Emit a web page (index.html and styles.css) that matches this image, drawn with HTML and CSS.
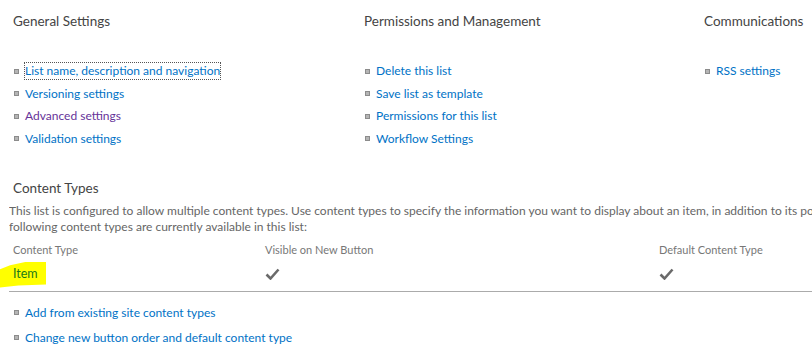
FILE: index.html
```html
<!DOCTYPE html>
<html>
<head>
  <title>List Settings</title>
  <link rel="stylesheet" href="styles.css">
</head>
<body>
  <div class="settings">
    <div class="group">
      <h2>General Settings</h2>
      <ul class="links">
        <li><a href="#" class="focused">List name, description and navigation</a></li>
        <li><a href="#">Versioning settings</a></li>
        <li><a href="#" class="visited">Advanced settings</a></li>
        <li><a href="#">Validation settings</a></li>
      </ul>
    </div>
    <div class="group">
      <h2>Permissions and Management</h2>
      <ul class="links">
        <li><a href="#">Delete this list</a></li>
        <li><a href="#">Save list as template</a></li>
        <li><a href="#">Permissions for this list</a></li>
        <li><a href="#">Workflow Settings</a></li>
      </ul>
    </div>
    <div class="group">
      <h2>Communications</h2>
      <ul class="links">
        <li><a href="#">RSS settings</a></li>
      </ul>
    </div>
  </div>

  <div class="content-types">
    <h2>Content Types</h2>
    <p class="description">This list is configured to allow multiple content types. Use content types to specify the information you want to display about an item, in addition to its policies, workflows, or other behavior. The<br>following content types are currently available in this list:</p>

    <div class="ct-table">
      <div class="ct-row ct-head">
        <div class="col-name">Content Type</div>
        <div class="col-visible">Visible on New Button</div>
        <div class="col-default">Default Content Type</div>
      </div>
      <div class="ct-row ct-item">
        <div class="col-name"><span class="highlight"><a href="#" class="item-link">Item</a></span></div>
        <div class="col-visible">
          <svg class="check" width="15" height="12" viewBox="0 0 15 12"><path d="M1.5 6.5 L5.5 10.5 L13.5 1.5" fill="none" stroke="#6a6a6a" stroke-width="2.6"/></svg>
        </div>
        <div class="col-default">
          <svg class="check" width="15" height="12" viewBox="0 0 15 12"><path d="M1.5 6.5 L5.5 10.5 L13.5 1.5" fill="none" stroke="#6a6a6a" stroke-width="2.6"/></svg>
        </div>
      </div>
    </div>

    <ul class="links ct-links">
      <li><a href="#">Add from existing site content types</a></li>
      <li><a href="#">Change new button order and default content type</a></li>
    </ul>
  </div>
</body>
</html>
```

FILE: styles.css
```css
body {
  font-family: "Segoe UI", Lato, sans-serif;
  font-size: 12px;
  line-height: 16px;
  color: #444;
  background-color: #fff;
  margin: 0;
  padding: 0;
  overflow: hidden;
}

h2 {
  font-size: 13.5px;
  line-height: 20px;
  font-weight: normal;
  color: #444;
  margin: 0;
}

a {
  color: #0072c6;
  text-decoration: none;
}

a.visited {
  color: #663399;
}

a.focused {
  outline: 1px dotted #555;
}

.settings {
  display: grid;
  grid-template-columns: 351px 340px 1fr;
  padding: 11px 0 0 13px;
}

.links {
  list-style: none;
  margin: 0;
  padding: 0;
}

.group .links {
  margin-top: 29px;
}

.links li {
  display: flex;
  align-items: center;
  height: 22.5px;
}

.links li::before {
  content: "";
  width: 3px;
  height: 3px;
  background-color: #b5b5b5;
  border: 1px solid #8c8c8c;
  margin: 0 6px 0 1px;
  flex: none;
}

.content-types {
  padding: 28px 0 0 9px;
  overflow: hidden;
}

.content-types h2 {
  padding-left: 4px;
}

.description {
  margin: 5px 0 0 0;
  color: #666;
  white-space: nowrap;
  overflow: hidden;
}

.ct-table {
  margin-top: 3px;
  border-bottom: 1px solid #ababab;
}

.ct-row {
  display: grid;
  grid-template-columns: 256px 394px 1fr;
  align-items: center;
}

.ct-head {
  height: 24px;
  font-size: 11px;
  color: #777;
}

.ct-row .col-name {
  padding-left: 4px;
}

.ct-item {
  height: 23px;
  padding-bottom: 6px;
}

.check {
  display: block;
}

.highlight {
  position: relative;
  display: inline-block;
}

.highlight::before {
  content: "";
  position: absolute;
  left: -13px;
  top: -4px;
  width: 46px;
  height: 26px;
  background-color: #ffff00;
  clip-path: polygon(22% 14%, 60% 0, 100% 0, 100% 88%, 40% 92%, 0 100%, 0 30%);
  z-index: 0;
}

.item-link {
  position: relative;
  z-index: 1;
  color: #1a7a1a;
  font-size: 12.5px;
}

.ct-links {
  margin-top: 8px;
  padding-left: 4px;
}

.ct-links li {
  height: 25px;
}
```
